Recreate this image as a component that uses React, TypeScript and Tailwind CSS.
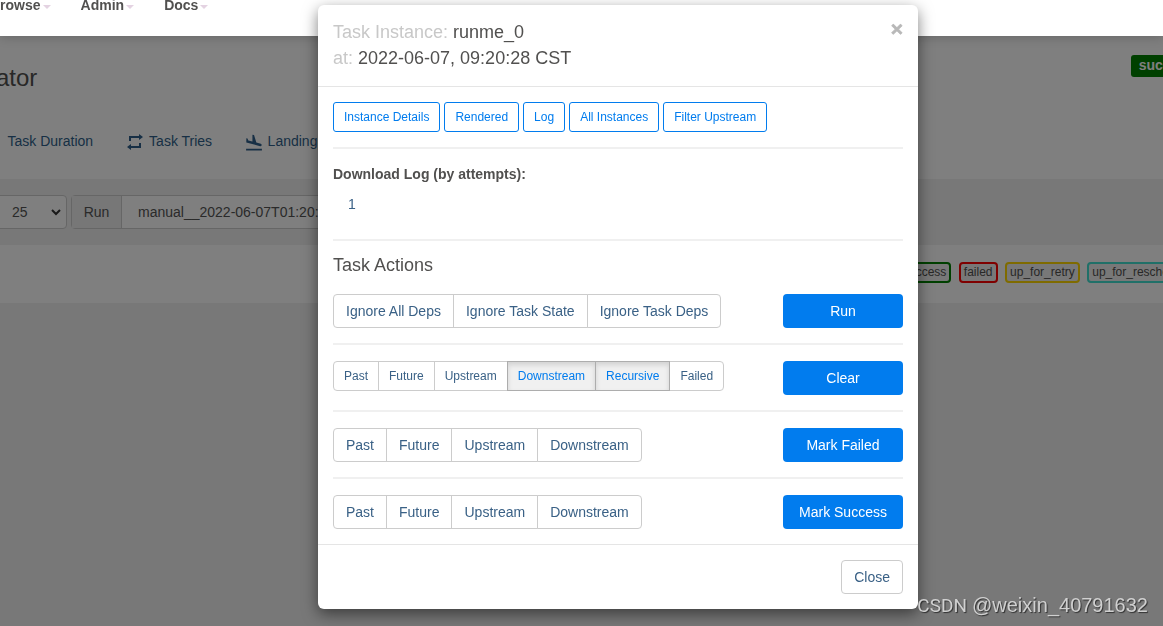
import React from 'react';
import { MdFlightLand } from 'react-icons/md';

const navItems = ['Browse', 'Admin', 'Docs'];

const instanceLinks = ['Instance Details', 'Rendered', 'Log', 'All Instances', 'Filter Upstream'];

const taskStates = [
  { name: 'success', border: 'border-[#008000]' },
  { name: 'failed', border: 'border-[#ff0000]' },
  { name: 'up_for_retry', border: 'border-[#ffd700]' },
  { name: 'up_for_reschedule', border: 'border-[#40e0d0]' },
];

const RepeatIcon: React.FC = () => (
  <svg className="mt-0.5" width="16" height="16" viewBox="0 0 16 16" fill="currentColor">
    <path d="M2 2h10V0l4 3-4 3V4H4v3H2z" />
    <path d="M14 14H4v2l-4-3 4-3v2h8V9h2z" />
  </svg>
);

const NavBar: React.FC = () => (
  <nav className="relative z-20 flex h-9 overflow-hidden bg-white pt-px text-sm leading-5 font-bold text-[#51504f] shadow-[0_1px_12px_rgba(0,0,0,0.2)]">
    {/* Scrolled halfway out of view, so the labels sit above the middle */}
    <div className="-mt-[6px] -ml-[10px] flex h-5 gap-[30px]">
      {navItems.map((item) => (
        <span key={item} className="flex items-center gap-0.5">
          {item}
          <span className="mt-[3px] border-x-4 border-t-4 border-x-transparent border-t-[#e4d3e2]" />
        </span>
      ))}
    </div>
  </nav>
);

const DagHeader: React.FC = () => (
  <header className="h-[143px] overflow-hidden bg-white">
    <div className="flex items-start justify-between">
      <h3 className="mt-[27px] -ml-1 text-2xl leading-[30px] text-[#51504f]">ator</h3>
      <span className="mt-[19px] -mr-[39px] h-[22px] rounded-[3px] bg-[#008000] px-2 text-sm leading-5 font-bold text-white">
        success
      </span>
    </div>
    <div className="mt-[38px] flex h-5 items-center whitespace-nowrap text-sm leading-5 text-[#2f5f8a]">
      <span className="ml-[7.5px]">Task Duration</span>
      <span className="ml-[34px] flex items-center gap-1.5">
        <RepeatIcon />
        Task Tries
      </span>
      <span className="ml-[31.5px] flex items-center gap-1">
        <MdFlightLand size={20} className="mt-[3px]" />
        Landing Times
      </span>
    </div>
  </header>
);

const RunPicker: React.FC = () => (
  <div className="flex h-[66px] items-center bg-[#f0f0f0] text-sm text-[#555]">
    <div className="-ml-[5px] flex h-[34px] w-[72px] items-center justify-between rounded border border-[#ccc] bg-white pr-1 pl-4">
      25
      <svg width="12" height="12" viewBox="0 0 12 12" fill="none" stroke="#333" strokeWidth="2">
        <path d="M2 4l4 4 4-4" />
      </svg>
    </div>
    <div className="ml-1 flex h-[34px] items-center rounded border border-[#ccc] bg-white whitespace-nowrap">
      <span className="flex h-full w-[50px] items-center justify-center border-r border-[#ccc] bg-[#eee]">Run</span>
      <span className="px-4">manual__2022-06-07T01:20:27.994530+00:00</span>
    </div>
  </div>
);

const StateLegend: React.FC = () => (
  <div className="flex h-[58px] items-center overflow-hidden bg-white pb-1">
    <div className="ml-[898px] flex gap-[7.5px] text-xs text-[#51504f]">
      {taskStates.map((state) => (
        <span
          key={state.name}
          className={`h-[21px] rounded border-2 bg-[#f0f0f0] px-[3px] leading-4 whitespace-nowrap ${state.border}`}
        >
          {state.name}
        </span>
      ))}
    </div>
  </div>
);

const Divider: React.FC = () => <hr className="mt-[15px] mb-4 h-0.5 border-0 bg-[#f0f0f0]" />;

interface ActionRowProps {
  options: string[];
  action: string;
  active?: string[];
  small?: boolean;
}

const ActionRow: React.FC<ActionRowProps> = ({ options, action, active = [], small = false }) => (
  <div className="flex h-[34px] items-start justify-between">
    <div className={small ? 'flex text-xs leading-[18px]' : 'flex text-sm leading-5'}>
      {options.map((option) => (
        <button
          key={option}
          className={`-ml-px border first:ml-0 first:rounded-l last:rounded-r ${
            small ? 'px-[10px] py-[5px]' : 'px-3 py-1.5'
          } ${
            active.includes(option)
              ? 'relative border-[#adadad] bg-[#f0f0f0] text-[#017cee] shadow-[inset_0_3px_5px_rgba(0,0,0,0.125)]'
              : 'border-[#ccc] bg-white text-[#3a6186]'
          }`}
        >
          {option}
        </button>
      ))}
    </div>
    <button className="h-[34px] w-[120px] rounded bg-[#017cee] text-sm text-white">{action}</button>
  </div>
);

const TaskInstanceModal: React.FC = () => (
  <div className="fixed top-[5px] left-[318px] z-30 h-[604px] w-[600px] rounded-md bg-white shadow-[0_5px_15px_rgba(0,0,0,0.5)]">
    <div className="flex h-[82px] items-start justify-between border-b border-[#e5e5e5] px-[15px] pt-[14px]">
      <h4 className="text-lg leading-[26px] text-[#51504f]">
        <span className="text-[#c8c8c8]">Task Instance:</span> runme_0
        <br />
        <span className="text-[#c8c8c8]">at:</span> 2022-06-07, 09:20:28 CST
      </h4>
      <button className="text-[21px] leading-5 font-bold text-[#b8b8b8] [-webkit-text-stroke:0.6px_#b8b8b8]">×</button>
    </div>

    <div className="h-[457px] px-[15px] pt-[15px]">
      <div className="flex gap-1">
        {instanceLinks.map((link) => (
          <button
            key={link}
            className="rounded-[3px] border border-[#017cee] px-[10px] py-[5px] text-xs leading-[18px] text-[#017cee]"
          >
            {link}
          </button>
        ))}
      </div>
      <hr className="my-[15px] h-0.5 border-0 bg-[#f0f0f0]" />
      <div className="text-sm leading-5">
        <label className="block font-bold text-[#51504f]">Download Log (by attempts):</label>
        <a className="block px-[15px] py-[10px] text-[#3a6186]">1</a>
      </div>
      <hr className="mt-[15px] mb-[14px] h-0.5 border-0 bg-[#f0f0f0]" />
      <h4 className="mb-[19px] text-lg leading-5 text-[#51504f]">Task Actions</h4>
      <ActionRow options={['Ignore All Deps', 'Ignore Task State', 'Ignore Task Deps']} action="Run" />
      <Divider />
      <ActionRow
        small
        options={['Past', 'Future', 'Upstream', 'Downstream', 'Recursive', 'Failed']}
        active={['Downstream', 'Recursive']}
        action="Clear"
      />
      <Divider />
      <ActionRow options={['Past', 'Future', 'Upstream', 'Downstream']} action="Mark Failed" />
      <Divider />
      <ActionRow options={['Past', 'Future', 'Upstream', 'Downstream']} action="Mark Success" />
    </div>

    <div className="flex justify-end border-t border-[#e5e5e5] p-[15px]">
      <button className="rounded border border-[#ccc] px-3 py-1.5 text-sm leading-5 text-[#3a6186]">Close</button>
    </div>
  </div>
);

const App: React.FC = () => {
  return (
    <div className="h-[626px] w-[1163px] overflow-hidden bg-[#f0f0f0] font-['Liberation_Sans',Arial,sans-serif]">
      <NavBar />
      <DagHeader />
      <RunPicker />
      <StateLegend />
      <div className="fixed inset-0 z-10 bg-black/50" />
      <TaskInstanceModal />
      <div className="fixed right-[15px] bottom-2 z-40 flex items-baseline gap-[5px] text-xl leading-6 text-[#d0d0d0] [text-shadow:1px_1px_1px_rgba(0,0,0,0.6)]">
        <span className="font-[Roboto,sans-serif] text-[19px]">CSDN</span>
        <span>@weixin_40791632</span>
      </div>
    </div>
  );
};

export default App;
